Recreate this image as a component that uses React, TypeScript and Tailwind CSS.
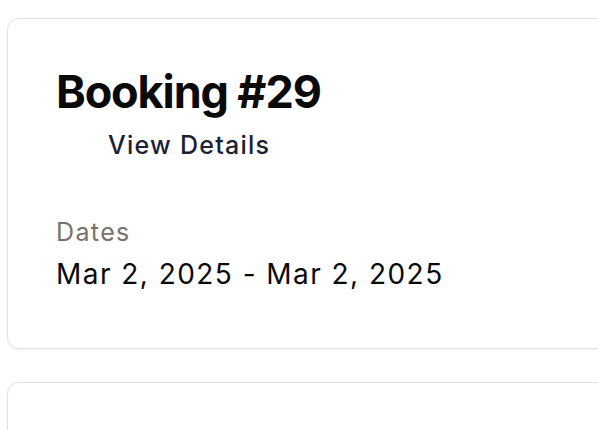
import React from "react";

export default function App() {
  return (
    <div className="min-h-[430px] w-[598px] overflow-hidden bg-white" style={{ fontFamily: "Inter, 'Noto Sans', sans-serif" }}>
      <div className="flex w-[660px] flex-col gap-[33px] pl-[7px] pt-[18px]">
        <div className="rounded-[12px] border border-[#e3e3e3] bg-white shadow-[0_1px_3px_rgba(0,0,0,0.06)]">
          <div className="flex flex-col pb-[56px] pl-[48px] pt-[46px]">
            <h1 className="text-[45px] font-bold leading-[54px] tracking-[-0.025em] text-[#0a0a0a]">Booking #29</h1>
            <div className="mt-[8px] pl-[52px]">
              <span className="text-[25px] font-medium leading-[36px] tracking-[0.05em] text-[#1a2238]">View Details</span>
            </div>
            <div className="mt-[53px] flex flex-col gap-[7px]">
              <span className="text-[25px] leading-[33px] tracking-[0.055em] text-[#78716c]">Dates</span>
              <span className="text-[28px] leading-[36px] tracking-[0.052em] text-[#0a0a0a]">Mar 2, 2025 - Mar 2, 2025</span>
            </div>
          </div>
        </div>
        <div className="h-[120px] rounded-[12px] border border-[#e3e3e3] bg-white shadow-[0_1px_3px_rgba(0,0,0,0.06)]"></div>
      </div>
    </div>
  );
}
